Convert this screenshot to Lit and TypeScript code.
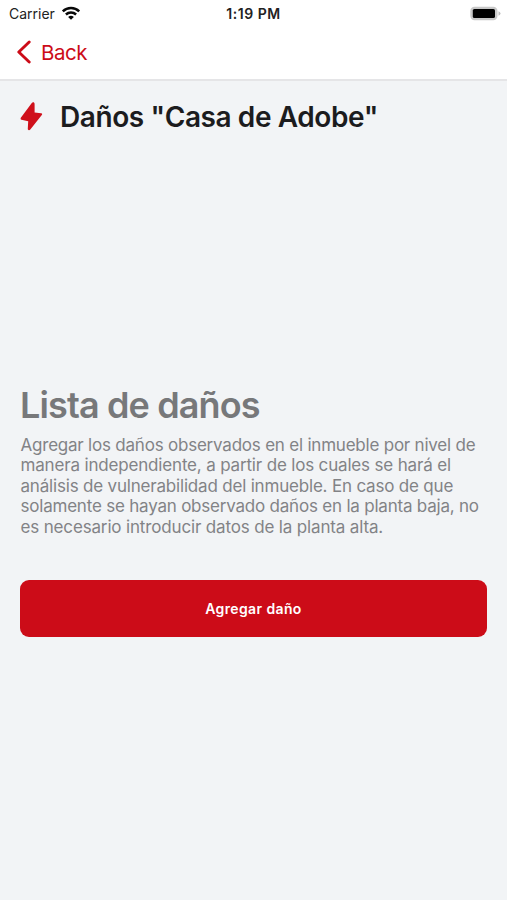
import { LitElement, html, css } from "lit";
import { customElement } from "lit/decorators.js";
import { styleMap } from "lit/directives/style-map.js";

const description = [
  { text: "Agregar los daños observados en el inmueble por nivel de", tracking: -0.215 },
  { text: "manera independiente, a partir de los cuales se hará el", tracking: -0.17 },
  { text: "análisis de vulnerabilidad del inmueble. En caso de que", tracking: -0.19 },
  { text: "solamente se hayan observado daños en la planta baja, no", tracking: -0.21 },
  { text: "es necesario introducir datos de la planta alta.", tracking: -0.155 },
];

@customElement("app-root")
export class AppRoot extends LitElement {
  static styles = css`
    :host { display: flex; flex-direction: column; width: 507px; height: 900px; background: #f2f4f6; font-family: Inter, "Liberation Sans", sans-serif; color: #1c1c1e; overflow: hidden; }
    .top { background: #fff; height: 79px; border-bottom: 2px solid #e5e5e7; }
    .status { display: grid; grid-template-columns: 1fr auto 1fr; height: 27px; align-items: center; padding: 0 6px; box-sizing: border-box; font-size: 14px; color: #222; }
    .carrier { display: flex; align-items: center; gap: 6px; padding-left: 3px; }
    .time { font-size: 14px; font-weight: 600; letter-spacing: 0.52px; }
    .battery { justify-self: end; }
    .back { display: flex; align-items: center; gap: 9px; height: 50px; padding: 0 0 0 16px; border: 0; background: none; color: #cc0c18; font: 400 20.5px Inter, sans-serif; letter-spacing: -0.45px; }
    .heading { display: flex; align-items: center; gap: 15px; height: 72px; padding-left: 19px; }
    h1 { margin: 0; font-size: 28px; font-weight: 600; letter-spacing: -0.41px; white-space: nowrap; }
    .main { padding: 232px 20px 0; }
    h2 { margin: 0; font-size: 36px; line-height: 40px; font-weight: 600; letter-spacing: -0.87px; color: #77787a; }
    .copy { margin: 10px 0 0; padding-left: 0.5px; font-size: 17px; line-height: 20.4px; color: #828386; white-space: nowrap; }
    .line { display: block; }
    .add { display: block; width: 467px; height: 56.5px; margin-top: 43px; padding: 1px 0 0; border: 0; border-radius: 9px; background: #cc0c18; color: #fff; font: 600 14px Inter, sans-serif; letter-spacing: 0.38px; }
    svg { display: block; flex: none; }
  `;

  render() {
    return html`
      <header class="top">
        <div class="status">
          <span class="carrier">Carrier
            <svg width="20" height="15" viewBox="0 0 20 15" fill="none" stroke="#080808" stroke-width="2.5">
              <path d="M1.8 5.3C6.4.9 13.6.9 18.2 5.3"/>
              <path d="M4.9 8.5C7.8 5.8 12.2 5.8 15.1 8.5"/>
              <path d="M7.1 10.9Q10 8.6 12.9 10.9L10 13.8Z" fill="#080808" stroke="none"/>
            </svg>
          </span>
          <span class="time">1:19 PM</span>
          <svg class="battery" width="31" height="16" viewBox="0 0 31 16">
            <rect x=".3" y=".8" width="27.2" height="13.4" rx="4.2" fill="#c8c8c8"/>
            <rect x="2.8" y="3" width="22.2" height="9" rx="1.6" fill="#000"/>
            <path d="M28.5 5.3Q30.5 6 30.5 7.5T28.5 9.7Z" fill="#bcbcbc"/>
          </svg>
        </div>
        <button class="back">
          <svg width="16" height="24" viewBox="0 0 16 24" fill="none" stroke="#cc0c18" stroke-width="2.9" stroke-linecap="round" stroke-linejoin="round"><path d="M13.2 2L2.8 12L13.2 22"/></svg>
          Back
        </button>
      </header>
      <div class="heading">
        <svg width="26" height="30" viewBox="0 0 26 30"><path d="M12.6 1.2L2 15.6Q1 17.2 2.5 17.8L9.2 19.3L8.8 26.6C8.7 28.5 10.5 28.6 11.5 27.3L22.8 12.9Q23.8 11.3 22.1 11.2L15.6 10.6L15.6 2.2C15.6.2 13.8-.2 12.6 1.2Z" fill="#cf101b"/></svg>
        <h1>Daños "Casa de Adobe"</h1>
      </div>
      <main class="main">
        <h2>Lista de daños</h2>
        <p class="copy">${description.map(line => html`<span class="line" style=${styleMap({ letterSpacing: `${line.tracking}px` })}>${line.text}</span>`)}</p>
        <button class="add">Agregar daño</button>
      </main>`;
  }
}
